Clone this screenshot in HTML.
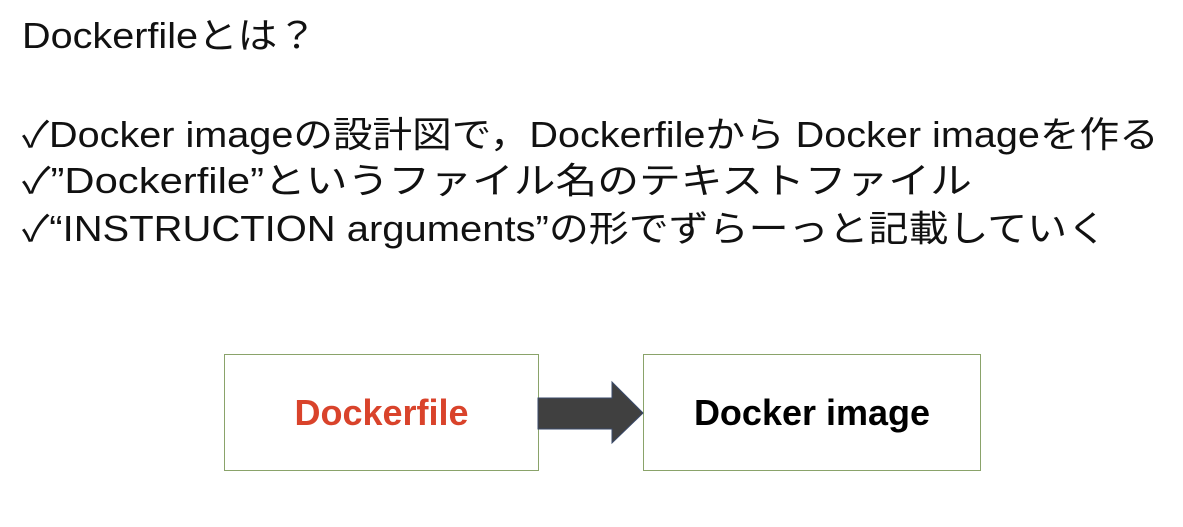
<!DOCTYPE html>
<html><head><meta charset="utf-8"><style>
body{margin:0;width:1183px;height:527px;background:#fff;overflow:hidden;position:relative;font-family:"Liberation Sans","Noto Sans CJK JP",sans-serif;color:#111}
.t{position:absolute;left:22px;white-space:nowrap;font-size:36px;line-height:1;transform-origin:left top}
.box{position:absolute;border:1.5px solid #8aa36a;box-sizing:border-box;background:#fff;display:flex;align-items:center;justify-content:center;font-weight:bold;font-size:36px}
</style></head><body>
<div class="t" style="top:18px;transform:scaleX(1.1)">Dockerfileとは？</div>
<div class="t" style="top:117px;transform:scaleX(1.1)">✓Docker imageの設計図で，Dockerfileから Docker imageを作る</div>
<div class="t" style="top:163px;transform:scaleX(1.16)">✓”Dockerfile”というファイル名のテキストファイル</div>
<div class="t" style="top:211px;transform:scaleX(1.11)">✓“INSTRUCTION arguments”の形でずらーっと記載していく</div>
<div class="box" style="left:224px;top:354px;width:315px;height:117px;color:#d9432b">Dockerfile</div>
<div class="box" style="left:643px;top:354px;width:338px;height:117px;color:#000">Docker image</div>
<svg style="position:absolute;left:0;top:0" width="1183" height="527"><polygon points="538,398 612,398 612,382 643,413 612,443 612,429 538,429" fill="#404040" stroke="#3a4a6a" stroke-width="1"/></svg>
</body></html>
